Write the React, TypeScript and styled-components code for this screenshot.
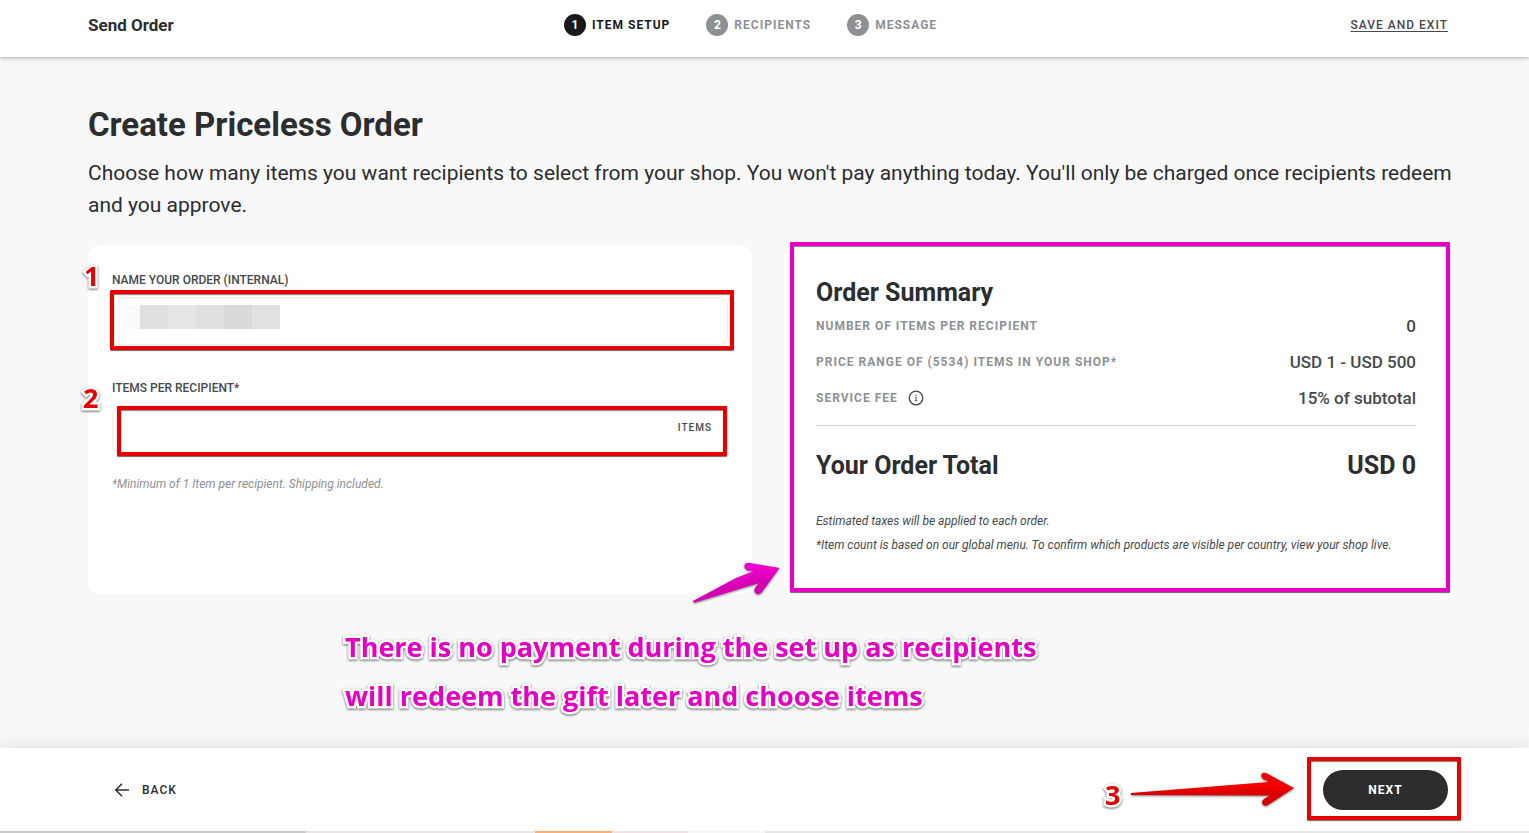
import React from 'react';
import styled, { createGlobalStyle } from 'styled-components';

const ink = '#2b2d2f';
const slate = '#45494c';
const muted = '#8e9194';
const red = '#e60000';
const pink = '#e600c3';

const GlobalStyle = createGlobalStyle`
  *, *::before, *::after { box-sizing: border-box; }
  body {
    margin: 0;
    background: #f8f8f8;
    color: ${ink};
    font-family: Roboto, "Liberation Sans", sans-serif;
  }
  button, input { font: inherit; }
`;

const Page = styled.div`
  display: flex;
  flex-direction: column;
  min-height: 100vh;
  overflow-x: hidden;
`;

const Header = styled.header`
  display: grid;
  grid-template-columns: 35% auto 1fr;
  align-items: center;
  padding: 14px 81px 21px 88px;
  background: #fff;
  box-shadow: 0 1px 4px rgba(0, 0, 0, 0.3);
`;

const Brand = styled.span`
  font-size: 17px;
  line-height: 22px;
  font-weight: 700;
`;

const Steps = styled.ol`
  display: flex;
  gap: 36px;
  margin: 0;
  padding: 0;
  list-style: none;
`;

const Step = styled.li<{ $active?: boolean }>`
  display: flex;
  align-items: center;
  gap: 6px;
  color: ${(p) => (p.$active ? '#18191a' : muted)};
  font-size: 12px;
  font-weight: 700;
  letter-spacing: 1px;
`;

const StepNumber = styled.span<{ $active?: boolean }>`
  display: grid;
  place-items: center;
  width: 22px;
  height: 22px;
  border-radius: 50%;
  background: ${(p) => (p.$active ? '#18191a' : muted)};
  color: #fff;
  font-weight: 700;
  letter-spacing: 0;
`;

const ExitLink = styled.a`
  justify-self: end;
  color: ${slate};
  font-size: 12px;
  font-weight: 500;
  letter-spacing: 1px;
  text-underline-offset: 2px;
`;

const Main = styled.main`
  flex: 1;
  padding: 48px 81px 24px 88px;
`;

const Title = styled.h1`
  margin: 0 0 12px;
  font-size: 33px;
  line-height: 40px;
  font-weight: 700;
`;

const Intro = styled.p`
  margin: 0 -16px 24px 0;
  font-size: 21px;
  line-height: 32px;
`;

const Cards = styled.div`
  position: relative;
  display: grid;
  grid-template-columns: 1fr 1fr;
  gap: 32px;
`;

const Card = styled.section<{ $pad: number }>`
  position: relative;
  padding: ${(p) => p.$pad}px ${(p) => p.$pad}px 37px;
  border-radius: 12px;
  background: #fff;
`;

const FieldLabel = styled.label`
  display: block;
  margin-bottom: 6px;
  color: ${slate};
  font-size: 12px;
  line-height: 22px;
  font-weight: 500;
`;

const Field = styled.div`
  position: relative;
  margin-bottom: 32px;
  &:last-of-type { margin-bottom: 19px; }
`;

const TextInput = styled.input`
  display: block;
  width: 100%;
  height: 48px;
  padding: 0 16px;
  border: 1px solid #eceeee;
  border-radius: 8px;
  background: #fff;
  color: ${ink};
  font-size: 16px;
  outline: none;
`;

const Suffix = styled.span`
  position: absolute;
  top: 13px;
  right: 16px;
  color: ${slate};
  font-size: 10px;
  line-height: 20px;
  font-weight: 500;
  letter-spacing: 1px;
`;

const Redaction = styled.div`
  position: absolute;
  top: 8px;
  left: 13px;
  display: flex;
`;

const Mosaic = styled.span<{ $tone: string; $narrow?: boolean }>`
  width: ${(p) => (p.$narrow ? 15 : 28)}px;
  height: 24px;
  background: ${(p) => p.$tone};
`;

const Hint = styled.p<{ $tone: string }>`
  margin: 0;
  color: ${(p) => p.$tone};
  font-size: 12px;
  line-height: 24px;
  font-style: italic;
`;

const SummaryTitle = styled.h2`
  margin: 0 0 5px;
  font-size: 25px;
  line-height: 32px;
  font-weight: 700;
`;

const SummaryList = styled.dl`
  display: flex;
  flex-direction: column;
  gap: 12px;
  margin: 0 0 24px;
  padding-bottom: 15px;
  border-bottom: 1px solid #c9cbcc;
`;

const SummaryRow = styled.div`
  display: flex;
  justify-content: space-between;
  align-items: center;
  height: 24px;
`;

const SummaryTerm = styled.dt`
  display: flex;
  align-items: center;
  gap: 10px;
  color: ${muted};
  font-size: 12px;
  font-weight: 700;
  letter-spacing: 1px;
`;

const SummaryValue = styled.dd`
  margin: 0;
  color: ${slate};
  font-size: 17px;
  font-weight: 500;
`;

const Total = styled.div`
  display: flex;
  justify-content: space-between;
  margin-bottom: 27px;
  font-size: 25px;
  line-height: 32px;
  font-weight: 700;
`;

const Footer = styled.footer`
  background: #fff;
  box-shadow: 0 -4px 16px rgba(0, 0, 0, 0.08);
`;

const FooterBar = styled.div`
  display: flex;
  justify-content: space-between;
  align-items: center;
  padding: 22px 81px 21px 114px;
`;

const BackButton = styled.button`
  display: flex;
  align-items: center;
  gap: 12px;
  padding: 0;
  border: 0;
  background: none;
  color: ${ink};
  font-size: 12px;
  font-weight: 500;
  letter-spacing: 1px;
`;

const NextArea = styled.div`
  position: relative;
`;

const NextButton = styled.button`
  display: block;
  width: 125px;
  height: 40px;
  border: 0;
  border-radius: 20px;
  background: ${ink};
  color: #fff;
  font-size: 12px;
  font-weight: 700;
  letter-spacing: 1px;
`;

const Strip = styled.div`
  height: 2px;
  background: linear-gradient(
    to right,
    #cbcbcb 0 20%, #e9e5e4 20% 35%, #fbb074 35% 40%,
    #f1e1e4 40% 45%, #f7f7f7 45% 50%, #e6e6e6 50%
  );
`;

const Frame = styled.div<{ $color: string; $inset: string }>`
  position: absolute;
  inset: ${(p) => p.$inset};
  border: 4px solid ${(p) => p.$color};
  border-radius: 1px;
  box-shadow: 0 1px 1px rgba(0, 0, 0, 0.6), inset 0 1px 1px rgba(0, 0, 0, 0.5);
  pointer-events: none;
`;

const Marker = styled.span<{ $top: number; $left: number }>`
  position: absolute;
  top: ${(p) => p.$top}px;
  left: ${(p) => p.$left}px;
  color: ${red};
  font-family: "Open Sans", "Noto Sans", sans-serif;
  font-size: 27px;
  line-height: 32px;
  font-weight: 700;
  -webkit-text-stroke: 5px #fff;
  paint-order: stroke fill;
  filter: drop-shadow(0 1px 1px rgba(0, 0, 0, 0.6));
`;

const Callout = styled.p`
  margin: 28px 0 0 257px;
  color: ${pink};
  font-family: "Open Sans", "Noto Sans", sans-serif;
  font-size: 27px;
  line-height: 49px;
  font-weight: 700;
  -webkit-text-stroke: 5px #fff;
  paint-order: stroke fill;
  filter: drop-shadow(0 1px 1px rgba(0, 0, 0, 0.6));
`;

const CardArrow = styled.svg`
  position: absolute;
  left: calc(50% - 80px);
  bottom: -13px;
  filter: drop-shadow(0 1px 1px rgba(0, 0, 0, 0.5));
`;

const NextArrow = styled.svg`
  position: absolute;
  right: 152px;
  top: 0;
  filter: drop-shadow(0 1px 1px rgba(0, 0, 0, 0.5));
`;

const steps = ['ITEM SETUP', 'RECIPIENTS', 'MESSAGE'];

const InfoIcon = () => (
  <svg width="16" height="16" viewBox="0 0 16 16" fill="none" stroke={slate} aria-hidden="true">
    <circle cx="8" cy="8" r="6.8" strokeWidth="1.3" />
    <path d="M7 7.4H8.2V10.8M6.8 10.8H9.4" strokeWidth="0.9" />
    <circle cx="8" cy="5.3" r="0.7" fill={slate} stroke="none" />
  </svg>
);

const BackIcon = () => (
  <svg width="16" height="16" viewBox="0 0 16 16" fill="none" stroke={ink} strokeWidth="1.5" aria-hidden="true">
    <path d="M15 8H2M8 1.8L1.8 8L8 14.2" />
  </svg>
);

export default function App() {
  return (
    <Page>
      <GlobalStyle />
      <Header>
        <Brand>Send Order</Brand>
        <Steps>
          {steps.map((name, i) => (
            <Step key={name} $active={i === 0}>
              <StepNumber $active={i === 0}>{i + 1}</StepNumber>
              {name}
            </Step>
          ))}
        </Steps>
        <ExitLink href="#exit">SAVE AND EXIT</ExitLink>
      </Header>

      <Main>
        <Title>Create Priceless Order</Title>
        <Intro>
          Choose how many items you want recipients to select from your shop. You won't pay anything
          today. You'll only be charged once recipients redeem and you approve.
        </Intro>

        <Cards>
          <Card $pad={24}>
            <FieldLabel htmlFor="order-name">NAME YOUR ORDER (INTERNAL)</FieldLabel>
            <Field>
              <TextInput id="order-name" type="text" />
              <Redaction>
                <Mosaic $tone="#fcfaf9" $narrow />
                <Mosaic $tone="#dfdfdf" />
                <Mosaic $tone="#e3e5e7" />
                <Mosaic $tone="#dfdfdf" />
                <Mosaic $tone="#d9d9d9" />
                <Mosaic $tone="#dfe2e1" />
              </Redaction>
              <Frame $color={red} $inset="-7px -6px -5px -2px" />
            </Field>
            <FieldLabel htmlFor="item-count">ITEMS PER RECIPIENT*</FieldLabel>
            <Field>
              <TextInput id="item-count" type="text" inputMode="numeric" />
              <Suffix>ITEMS</Suffix>
              <Frame $color={red} $inset="1px 1px -3px 5px" />
            </Field>
            <Hint $tone={muted}>*Minimum of 1 Item per recipient. Shipping included.</Hint>
            <Marker $top={15} $left={-4}>1</Marker>
            <Marker $top={137} $left={-5}>2</Marker>
          </Card>

          <Card $pad={32}>
            <SummaryTitle>Order Summary</SummaryTitle>
            <SummaryList>
              <SummaryRow>
                <SummaryTerm>NUMBER OF ITEMS PER RECIPIENT</SummaryTerm>
                <SummaryValue>0</SummaryValue>
              </SummaryRow>
              <SummaryRow>
                <SummaryTerm>PRICE RANGE OF (5534) ITEMS IN YOUR SHOP*</SummaryTerm>
                <SummaryValue>USD 1 - USD 500</SummaryValue>
              </SummaryRow>
              <SummaryRow>
                <SummaryTerm>
                  SERVICE FEE <InfoIcon />
                </SummaryTerm>
                <SummaryValue>15% of subtotal</SummaryValue>
              </SummaryRow>
            </SummaryList>
            <Total>
              <span>Your Order Total</span>
              <span>USD 0</span>
            </Total>
            <Hint $tone={slate}>Estimated taxes will be applied to each order.</Hint>
            <Hint $tone={slate}>
              *Item count is based on our global menu. To confirm which products are visible per
              country, view your shop live.
            </Hint>
            <Frame $color={pink} $inset="-3px -2px 2px 6px" />
          </Card>

          <CardArrow width="96" height="48" viewBox="0 0 96 48" aria-hidden="true">
            <defs>
              <linearGradient id="pinkShade" x1="0" y1="0" x2="0.4" y2="1">
                <stop offset="0.4" stopColor="#f000cc" />
                <stop offset="0.7" stopColor="#d400b2" />
              </linearGradient>
            </defs>
            <path
              fill="url(#pinkShade)"
              d="M5 42L48 19L66 12L60 11.5Q56 10 56.5 6.5Q57.5 3 62 4L91.5 9L74 33Q71 36.5 68 34.5Q65.5 32.5 67 29L71 24L6 43.8Z"
            />
          </CardArrow>
        </Cards>

        <Callout>
          There is no payment during the set up as recipients
          <br />
          will redeem the gift later and choose items
        </Callout>
      </Main>

      <Footer>
        <FooterBar>
          <BackButton type="button">
            <BackIcon />
            BACK
          </BackButton>
          <NextArea>
            <NextButton type="button">NEXT</NextButton>
            <Frame $color={red} $inset="-13px -13px -10px -16px" />
            <Marker $top={9} $left={-218}>3</Marker>
            <NextArrow width="168" height="40" viewBox="0 0 168 40" aria-hidden="true">
              <defs>
                <linearGradient id="redShade" x1="0" y1="0" x2="0" y2="1">
                  <stop offset="0.4" stopColor="#f50000" />
                  <stop offset="0.65" stopColor="#d60000" />
                </linearGradient>
              </defs>
              <path
                fill="url(#redShade)"
                d="M3 23L141 12L135 9Q132 6 134 3.5Q136 2 140 4L166 18L140 35Q136 37 134.5 34Q133 31 136 29L142 25.5L3 25Z"
              />
            </NextArrow>
          </NextArea>
        </FooterBar>
        <Strip />
      </Footer>
    </Page>
  );
}
